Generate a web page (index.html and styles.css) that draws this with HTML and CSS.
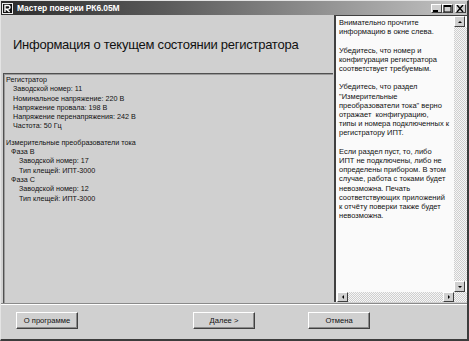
FILE: index.html
```html
<!DOCTYPE html>
<html lang="ru">
<head>
    <meta charset="UTF-8">
    <title>Мастер поверки РК6.05М</title>
    <link rel="stylesheet" href="styles.css">
</head>
<body>
    <div class="window">
        <div class="titlebar">
            <span class="app-icon">
                <svg width="11" height="11" viewBox="0 0 11 11">
                    <rect x="0.5" y="0.5" width="10" height="10" fill="#111" stroke="#eee"/>
                    <path d="M3 9V2.5h3.2a1.8 1.8 0 0 1 0 3.6H4.2L7.6 9" fill="none" stroke="#fff" stroke-width="1.4"/>
                </svg>
            </span>
            <span class="title">Мастер поверки РК6.05М</span>
            <div class="caption-buttons">
                <span class="cap-btn"><svg width="9" height="7" viewBox="0 0 9 7"><rect x="1" y="5" width="5" height="2" fill="#000"/></svg></span>
                <span class="cap-btn"><svg width="9" height="7" viewBox="0 0 9 7"><rect x="1" y="0" width="7" height="7" fill="none" stroke="#000" stroke-width="1"/><rect x="1" y="0" width="7" height="2" fill="#000"/></svg></span>
                <span class="cap-btn close"><svg width="9" height="7" viewBox="0 0 9 7"><path d="M1 0l6 7M7 0L1 7" stroke="#000" stroke-width="1.4"/></svg></span>
            </div>
        </div>

        <div class="main">
            <div class="left">
                <div class="header">
                    <h1>Информация о текущем состоянии регистратора</h1>
                </div>
                <div class="info">
                    <div class="lvl0">Регистратор</div>
                    <div class="lvl1">Заводской номер: 11</div>
                    <div class="lvl1">Номинальное напряжение: 220 В</div>
                    <div class="lvl1">Напряжение провала: 198 В</div>
                    <div class="lvl1">Напряжение перенапряжения: 242 В</div>
                    <div class="lvl1">Частота: 50 Гц</div>
                    <div class="gap"></div>
                    <div class="lvl0">Измерительные преобразователи тока</div>
                    <div class="phase">Фаза В</div>
                    <div class="lvl2">Заводской номер: 17</div>
                    <div class="lvl2">Тип клещей: ИПТ-3000</div>
                    <div class="phase">Фаза С</div>
                    <div class="lvl2">Заводской номер: 12</div>
                    <div class="lvl2">Тип клещей: ИПТ-3000</div>
                </div>
            </div>

            <div class="side">
                <div class="memo">
                    <div class="memo-text">
                        <p>Внимательно прочтите<br>информацию в окне слева.</p>
                        <p>Убедитесь, что номер и<br>конфигурация регистратора<br>соответствует требуемым.</p>
                        <p>Убедитесь, что раздел<br>"Измерительные<br>преобразователи тока" верно<br>отражает&nbsp; конфигурацию,<br>типы и номера подключенных к<br>регистратору ИПТ.</p>
                        <p>Если раздел пуст, то, либо<br>ИПТ не подключены, либо не<br>определены прибором. В этом<br>случае, работа с токами будет<br>невозможна. Печать<br>соответствующих приложений<br>к отчёту поверки также будет<br>невозможна.</p>
                    </div>
                    <div class="vscroll">
                        <span class="arrow-btn"><span class="tri up"></span></span>
                        <span class="track"></span>
                        <span class="arrow-btn"><span class="tri down"></span></span>
                    </div>
                    <div class="hscroll">
                        <span class="arrow-btn"><span class="tri left-tri"></span></span>
                        <span class="track"></span>
                        <span class="arrow-btn"><span class="tri right-tri"></span></span>
                    </div>
                    <div class="corner"></div>
                </div>
            </div>
        </div>

        <div class="footer">
            <button class="btn">О программе</button>
            <button class="btn btn-next">Далее &gt;</button>
            <button class="btn btn-cancel">Отмена</button>
        </div>
    </div>
</body>
</html>
```

FILE: styles.css
```css
body {
    margin: 0;
    background: #d0d0d0;
    font-family: "Liberation Sans", Arial, sans-serif;
    color: #111;
}
.window {
    width: 469px;
    height: 341px;
    box-sizing: border-box;
    background: #d0d0d0;
    border-top: 1px solid #e4e4e4;
    border-left: 1px solid #e4e4e4;
    border-right: 2px solid #3c3c3c;
    border-bottom: 2px solid #3c3c3c;
    display: flex;
    flex-direction: column;
    overflow: hidden;
}
.titlebar {
    height: 14px;
    flex: none;
    display: flex;
    align-items: center;
    background: linear-gradient(to right, #2c2c2c, #5a5a5a 35%, #c4c4c4);
    padding-left: 1px;
    padding-right: 1px;
}
.app-icon {
    display: flex;
    width: 11px;
    height: 11px;
}
.title {
    margin-left: 4px;
    color: #fff;
    font-weight: bold;
    font-size: 8.5px;
    letter-spacing: -0.1px;
    white-space: nowrap;
}
.caption-buttons {
    margin-left: auto;
    display: flex;
}
.cap-btn {
    width: 11px;
    height: 9px;
    box-sizing: border-box;
    display: flex;
    align-items: center;
    justify-content: center;
    background: #d0d0d0;
    border-top: 1px solid #fff;
    border-left: 1px solid #fff;
    border-right: 1px solid #404040;
    border-bottom: 1px solid #404040;
}
.cap-btn.close {
    margin-left: 2px;
}
.main {
    height: 288px;
    flex: none;
    display: flex;
}
.left {
    width: 332px;
    flex: none;
    display: flex;
    flex-direction: column;
}
.header {
    height: 58px;
    flex: none;
    display: flex;
    align-items: center;
    padding-left: 12px;
    padding-top: 1px;
    box-sizing: border-box;
}
.header h1 {
    margin: 0;
    font-size: 13px;
    font-weight: normal;
    letter-spacing: -0.25px;
    white-space: nowrap;
}
.info {
    flex: 1;
    margin-left: 2px;
    border-top: 1px solid #505050;
    border-left: 1px solid #505050;
    box-shadow: inset 1px 1px #9a9a9a;
    padding: 1px 0 0 2px;
    font-size: 7.2px;
    line-height: 9.3px;
    white-space: nowrap;
}
.lvl1 {
    padding-left: 7px;
}
.phase {
    padding-left: 5px;
}
.lvl2 {
    padding-left: 13px;
}
.gap {
    height: 7px;
}
.side {
    flex: 1;
    padding-left: 1px;
    padding-bottom: 1px;
}
.memo {
    height: 100%;
    box-sizing: border-box;
    border-top: 1px solid #404040;
    border-left: 2px solid #404040;
    background: #fafafa;
    display: grid;
    grid-template-columns: 1fr 13px;
    grid-template-rows: 1fr 10px;
    overflow: hidden;
}
.memo-text {
    padding: 2px 0 0 3px;
    font-size: 7.5px;
    line-height: 9.2px;
    white-space: nowrap;
    overflow: hidden;
}
.memo-text p {
    margin: 0 0 9.2px;
}
.vscroll {
    display: flex;
    flex-direction: column;
}
.hscroll {
    display: flex;
    padding-left: 1px;
}
.track {
    flex: 1;
    background: repeating-conic-gradient(#cfcfcf 0 25%, #f6f6f6 0 50%) 0 0 / 2px 2px;
}
.corner {
    background: repeating-conic-gradient(#cfcfcf 0 25%, #f6f6f6 0 50%) 0 0 / 2px 2px;
}
.vscroll .arrow-btn {
    width: 11px;
    height: 11px;
}
.hscroll .arrow-btn {
    width: 11px;
    height: 10px;
}
.arrow-btn {
    box-sizing: border-box;
    display: flex;
    align-items: center;
    justify-content: center;
    background: #d0d0d0;
    border-top: 1px solid #fff;
    border-left: 1px solid #fff;
    border-right: 1px solid #404040;
    border-bottom: 1px solid #404040;
}
.tri {
    width: 0;
    height: 0;
    border: 2px solid transparent;
}
.tri.up {
    border-bottom-color: #000;
    border-top-width: 0;
}
.tri.down {
    border-top-color: #000;
    border-bottom-width: 0;
}
.tri.left-tri {
    border-right-color: #000;
    border-left-width: 0;
}
.tri.right-tri {
    border-left-color: #000;
    border-right-width: 0;
}
.footer {
    flex: 1;
    border-top: 1px solid #8a8a8a;
    box-shadow: inset 0 1px #fff;
    padding: 8px 0 0 15px;
    display: flex;
    align-items: flex-start;
}
.btn {
    width: 62px;
    height: 17px;
    padding: 0;
    font-family: "Liberation Sans", Arial, sans-serif;
    font-size: 7.6px;
    color: #111;
    background: #d0d0d0;
    border-top: 1px solid #fff;
    border-left: 1px solid #fff;
    border-right: 1px solid #404040;
    border-bottom: 1px solid #404040;
    box-shadow: inset -1px -1px #8a8a8a;
}
.btn-next {
    margin-left: 115px;
}
.btn-cancel {
    margin-left: 53px;
}
```
